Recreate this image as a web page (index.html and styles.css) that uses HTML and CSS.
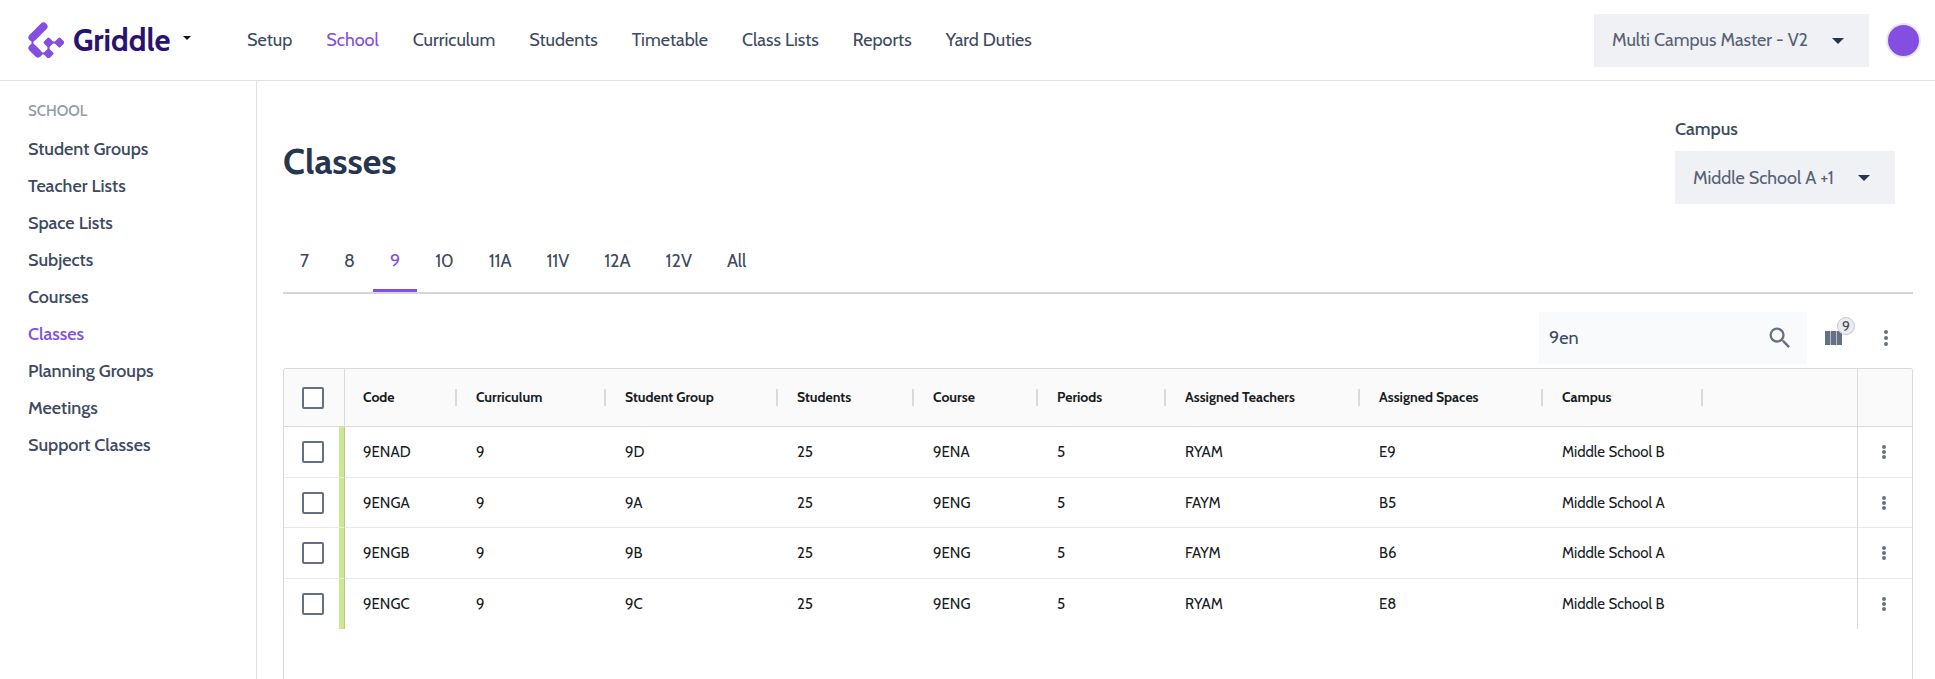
FILE: index.html
```html
<!DOCTYPE html>
<html lang="en">
<head>
    <meta charset="UTF-8">
    <meta name="viewport" content="width=device-width, initial-scale=1.0">
    <title>Griddle - Classes</title>
    <link rel="stylesheet" href="styles.css">
</head>
<body>

<!-- Top bar -->
<header class="topbar">
    <button type="button" class="brand">
        <svg class="brand-logo" viewBox="0 0 36 36" width="36" height="36" aria-hidden="true">
            <g fill="none" stroke="#844fe0" stroke-linejoin="round" stroke-linecap="round">
                <path d="M15.500 4.500L4.500 15.500" stroke-width="8"/>
                <path d="M4.500 26L10 31.500" stroke-width="8"/>
                <path d="M4.500 16V26M10 31.500H20.500V20.500H31.500" stroke-width="2"/>
            </g>
            <g fill="#844fe0" stroke="#844fe0" stroke-width="3" stroke-linejoin="round">
                <path d="M20.500 17L24 20.500L20.500 24L17 20.500Z"/>
                <path d="M31.500 17L35 20.500L31.500 24L28 20.500Z"/>
                <path d="M20.500 28L24 31.500L20.500 35L17 31.500Z"/>
            </g>
        </svg>
        <span class="brand-name">Griddle</span>
        <svg class="brand-caret" viewBox="0 0 8 4" width="8" height="4" aria-hidden="true"><path d="M0 0h8L4 4z" fill="#111"/></svg>
    </button>

    <nav class="main-nav" aria-label="Main">
        <a href="#">Setup</a>
        <a href="#" class="active">School</a>
        <a href="#">Curriculum</a>
        <a href="#">Students</a>
        <a href="#">Timetable</a>
        <a href="#">Class Lists</a>
        <a href="#">Reports</a>
        <a href="#">Yard Duties</a>
    </nav>

    <div class="select-box select-timetable">
        <select aria-label="Timetable version">
            <option>Multi Campus Master - V2</option>
        </select>
        <svg class="select-caret" viewBox="0 0 12 6" width="12" height="6" aria-hidden="true"><path d="M0 0h12L6 6z" fill="#263449"/></svg>
    </div>
    <button type="button" class="avatar" aria-label="Account"></button>
</header>

<div class="layout">
    <!-- Sidebar -->
    <aside class="sidebar">
        <h2>School</h2>
        <nav class="side-nav" aria-label="School">
            <a href="#">Student Groups</a>
            <a href="#">Teacher Lists</a>
            <a href="#">Space Lists</a>
            <a href="#">Subjects</a>
            <a href="#">Courses</a>
            <a href="#" class="active">Classes</a>
            <a href="#">Planning Groups</a>
            <a href="#">Meetings</a>
            <a href="#">Support Classes</a>
        </nav>
    </aside>

    <main class="content">
        <div class="page-head">
            <h1>Classes</h1>
            <div class="campus-filter">
                <label for="campus">Campus</label>
                <div class="select-box select-campus">
                    <select id="campus">
                        <option>Middle School A +1</option>
                    </select>
                    <svg class="select-caret" viewBox="0 0 12 6" width="12" height="6" aria-hidden="true"><path d="M0 0h12L6 6z" fill="#263449"/></svg>
                </div>
            </div>
        </div>

        <!-- Year level tabs -->
        <div class="tabs" role="tablist">
            <button type="button" role="tab">7</button>
            <button type="button" role="tab">8</button>
            <button type="button" role="tab" class="active" aria-selected="true">9</button>
            <button type="button" role="tab">10</button>
            <button type="button" role="tab">11A</button>
            <button type="button" role="tab">11V</button>
            <button type="button" role="tab">12A</button>
            <button type="button" role="tab">12V</button>
            <button type="button" role="tab">All</button>
        </div>

        <!-- Toolbar -->
        <div class="toolbar">
            <form class="search">
                <input type="text" aria-label="Search classes" value="9en">
                <button type="submit" class="icon-btn" aria-label="Search">
                    <svg viewBox="0 0 24 24" width="28" height="28" fill="#667085"><path d="M15.500 14h-.79l-.28-.27A6.470 6.470 0 0 0 16 9.500 6.500 6.500 0 1 0 9.500 16c1.610 0 3.090-.59 4.230-1.570l.27.28v.79l5 4.990L20.490 19l-4.990-5zm-6 0C7.010 14 5 11.990 5 9.500S7.010 5 9.500 5 14 7.010 14 9.500 11.990 14 9.500 14z"/></svg>
                </button>
            </form>
            <button type="button" class="icon-btn columns-btn" aria-label="Columns">
                <svg viewBox="0 0 17 14" width="17" height="14"><path d="M0 0h17v14H0z" fill="#667085"/><path d="M5.500 0v14M11.500 0v14" stroke="#b9bec8"/></svg>
                <span class="badge">9</span>
            </button>
            <button type="button" class="icon-btn more-btn" aria-label="More">
                <svg viewBox="0 0 4 16" width="4" height="16" fill="#667085"><circle cx="2" cy="2" r="2"/><circle cx="2" cy="8" r="2"/><circle cx="2" cy="14" r="2"/></svg>
            </button>
        </div>

        <!-- Class list -->
        <div class="grid">
            <table>
                <colgroup>
                    <col class="col-check">
                    <col class="col-code">
                    <col class="col-curriculum">
                    <col class="col-group">
                    <col class="col-students">
                    <col class="col-course">
                    <col class="col-periods">
                    <col class="col-teachers">
                    <col class="col-spaces">
                    <col class="col-campus">
                    <col>
                    <col class="col-menu">
                </colgroup>
                <thead>
                    <tr>
                        <th class="check"><input type="checkbox" aria-label="Select all"></th>
                        <th><span>Code</span></th>
                        <th><span>Curriculum</span></th>
                        <th><span>Student Group</span></th>
                        <th><span>Students</span></th>
                        <th><span>Course</span></th>
                        <th><span>Periods</span></th>
                        <th><span>Assigned Teachers</span></th>
                        <th><span>Assigned Spaces</span></th>
                        <th><span>Campus</span></th>
                        <th></th>
                        <th class="menu"></th>
                    </tr>
                </thead>
                <tbody>
                    <tr>
                        <td class="check"><input type="checkbox" aria-label="Select 9ENAD"></td>
                        <td>9ENAD</td>
                        <td>9</td>
                        <td>9D</td>
                        <td>25</td>
                        <td>9ENA</td>
                        <td>5</td>
                        <td>RYAM</td>
                        <td>E9</td>
                        <td>Middle School B</td>
                        <td></td>
                        <td class="menu"><button type="button" class="icon-btn" aria-label="Row menu"><svg viewBox="0 0 4 14" width="4" height="14" fill="#667085"><circle cx="2" cy="2" r="2"/><circle cx="2" cy="7" r="2"/><circle cx="2" cy="12" r="2"/></svg></button></td>
                    </tr>
                    <tr>
                        <td class="check"><input type="checkbox" aria-label="Select 9ENGA"></td>
                        <td>9ENGA</td>
                        <td>9</td>
                        <td>9A</td>
                        <td>25</td>
                        <td>9ENG</td>
                        <td>5</td>
                        <td>FAYM</td>
                        <td>B5</td>
                        <td>Middle School A</td>
                        <td></td>
                        <td class="menu"><button type="button" class="icon-btn" aria-label="Row menu"><svg viewBox="0 0 4 14" width="4" height="14" fill="#667085"><circle cx="2" cy="2" r="2"/><circle cx="2" cy="7" r="2"/><circle cx="2" cy="12" r="2"/></svg></button></td>
                    </tr>
                    <tr>
                        <td class="check"><input type="checkbox" aria-label="Select 9ENGB"></td>
                        <td>9ENGB</td>
                        <td>9</td>
                        <td>9B</td>
                        <td>25</td>
                        <td>9ENG</td>
                        <td>5</td>
                        <td>FAYM</td>
                        <td>B6</td>
                        <td>Middle School A</td>
                        <td></td>
                        <td class="menu"><button type="button" class="icon-btn" aria-label="Row menu"><svg viewBox="0 0 4 14" width="4" height="14" fill="#667085"><circle cx="2" cy="2" r="2"/><circle cx="2" cy="7" r="2"/><circle cx="2" cy="12" r="2"/></svg></button></td>
                    </tr>
                    <tr>
                        <td class="check"><input type="checkbox" aria-label="Select 9ENGC"></td>
                        <td>9ENGC</td>
                        <td>9</td>
                        <td>9C</td>
                        <td>25</td>
                        <td>9ENG</td>
                        <td>5</td>
                        <td>RYAM</td>
                        <td>E8</td>
                        <td>Middle School B</td>
                        <td></td>
                        <td class="menu"><button type="button" class="icon-btn" aria-label="Row menu"><svg viewBox="0 0 4 14" width="4" height="14" fill="#667085"><circle cx="2" cy="2" r="2"/><circle cx="2" cy="7" r="2"/><circle cx="2" cy="12" r="2"/></svg></button></td>
                    </tr>
                </tbody>
            </table>
        </div>
    </main>
</div>

</body>
</html>
```

FILE: styles.css
```css
/* Global Styles */
* {
    box-sizing: border-box;
}

body {
    font-family: 'Cabin', 'Lato', sans-serif;
    font-size: 18px;
    line-height: 24px;
    color: #3d4a5f;
    background-color: #ffffff;
    margin: 0;
    height: 100vh;
    display: flex;
    flex-direction: column;
    overflow: hidden;
}

a {
    color: inherit;
    text-decoration: none;
}

button, input, select {
    font: inherit;
    color: inherit;
    border: none;
    border-radius: 0;
    background: none;
    margin: 0;
    padding: 0;
}

button {
    cursor: pointer;
}

svg {
    display: block;
}

/* Top bar */
.topbar {
    display: flex;
    align-items: center;
    flex-shrink: 0;
    height: 81px;
    padding: 0 14px 0 28px;
    border-bottom: 1px solid #e2e2e2;
}

.brand {
    display: flex;
    align-items: center;
    width: 219px;
}

.brand-name {
    margin-left: 9px;
    font-size: 31px;
    line-height: 36px;
    font-weight: 700;
    color: #2a1370;
}

.brand-caret {
    margin: 0 0 4px 13px;
}

.main-nav {
    display: flex;
    gap: 34px;
    flex: 1;
    white-space: nowrap;
}

.main-nav .active, .side-nav .active, .tabs .active {
    color: #844fe0;
}

.select-box {
    position: relative;
    height: 53px;
    background-color: #f0f1f5;
}

.select-box select {
    appearance: none;
    width: 100%;
    height: 100%;
    padding: 0 40px 0 18px;
    color: #566274;
}

.select-caret {
    position: absolute;
    top: 24px;
    right: 25px;
    pointer-events: none;
}

.select-timetable {
    width: 275px;
    margin-right: 17px;
}

.select-campus {
    width: 220px;
}

.avatar {
    width: 35px;
    height: 35px;
    border: 2px solid #e6e6ec;
    border-radius: 50%;
    background-color: #844fe0;
}

/* Layout */
.layout {
    display: flex;
    flex: 1;
    min-height: 0;
}

.sidebar {
    flex-shrink: 0;
    width: 257px;
    padding: 18px 28px;
    border-right: 1px solid #e2e2e2;
}

.sidebar h2 {
    margin: 0 0 8px;
    font-size: 15px;
    line-height: 24px;
    font-weight: 500;
    text-transform: uppercase;
    color: #929ba8;
}

.side-nav {
    display: flex;
    flex-direction: column;
    line-height: 37px;
    font-weight: 500;
}

.content {
    display: flex;
    flex-direction: column;
    flex: 1;
    min-width: 0;
    padding: 36px 22px 0 26px;
}

.page-head {
    display: flex;
    justify-content: space-between;
    align-items: center;
    padding-right: 18px;
}

h1 {
    margin: 0;
    font-size: 36px;
    line-height: 44px;
    font-weight: 700;
    color: #26364f;
}

.campus-filter label {
    display: block;
    margin-bottom: 10px;
    font-weight: 500;
}

/* Tabs */
.tabs {
    display: flex;
    gap: 1px;
    margin-top: 26px;
    border-bottom: 2px solid #d3d7dc;
}

.tabs button {
    height: 62px;
    padding: 3px 17px 0;
    border-bottom: 3px solid transparent;
}

.tabs .active {
    border-bottom-color: #844fe0;
}

/* Toolbar */
.toolbar {
    display: flex;
    justify-content: flex-end;
    align-items: center;
    padding: 18px 25px 4px 0;
}

.search {
    display: flex;
    align-items: center;
    width: 268px;
    height: 52px;
    padding: 0 13px 0 10px;
    background-color: #f9fafc;
}

.search input {
    flex: 1;
    min-width: 0;
}

.search input:focus {
    outline: none;
}

.columns-btn {
    position: relative;
    margin-left: 18px;
}

.badge {
    position: absolute;
    top: -14px;
    right: -13px;
    width: 18px;
    height: 18px;
    border: 1px solid #c6c9d0;
    border-radius: 50%;
    background-color: #eaebee;
    font-size: 14px;
    line-height: 16px;
    text-align: center;
}

.more-btn {
    margin-left: 42px;
}

/* Class list */
.grid {
    flex: 1;
    border: 1px solid #d9dadb;
    border-bottom: none;
    border-radius: 3px 3px 0 0;
    overflow: hidden;
}

table {
    width: 100%;
    table-layout: fixed;
    border-collapse: separate;
    border-spacing: 0;
    font-size: 15px;
    line-height: 20px;
    color: #181d1f;
}

.col-check { width: 61px; }
.col-code { width: 113px; }
.col-curriculum { width: 149px; }
.col-group { width: 172px; }
.col-students { width: 136px; }
.col-course { width: 124px; }
.col-periods { width: 128px; }
.col-teachers { width: 194px; }
.col-spaces { width: 183px; }
.col-campus { width: 160px; }
.col-menu { width: 55px; }

th, td {
    padding: 0 0 0 18px;
    text-align: left;
    white-space: nowrap;
}

th {
    height: 58px;
    padding-right: 1px;
    border-bottom: 1px solid #d9dadb;
    background-color: #fafafa;
    font-size: 14px;
    font-weight: 700;
}

th span {
    display: block;
    border-right: 2px solid #d9dadb;
    line-height: 17px;
}

td {
    height: 50px;
    border-bottom: 1px solid #e8e9ea;
}

tr:nth-child(odd) td {
    height: 51px;
}

tr:last-child td {
    border-bottom: none;
}

.check {
    border-right: 1px solid #d9dadb;
}

td.check {
    border-right: 1px solid #b9ca8c;
    background: linear-gradient(to left, #cce893 5px, transparent 5px);
}

.check input {
    appearance: none;
    display: block;
    width: 22px;
    height: 22px;
    border: 2px solid #667085;
    border-radius: 2px;
    background-color: #ffffff;
}

.menu {
    padding: 0 2px 0 0;
    border-left: 1px solid #d9dadb;
}

.menu .icon-btn {
    display: block;
    margin: 0 auto;
}
```
